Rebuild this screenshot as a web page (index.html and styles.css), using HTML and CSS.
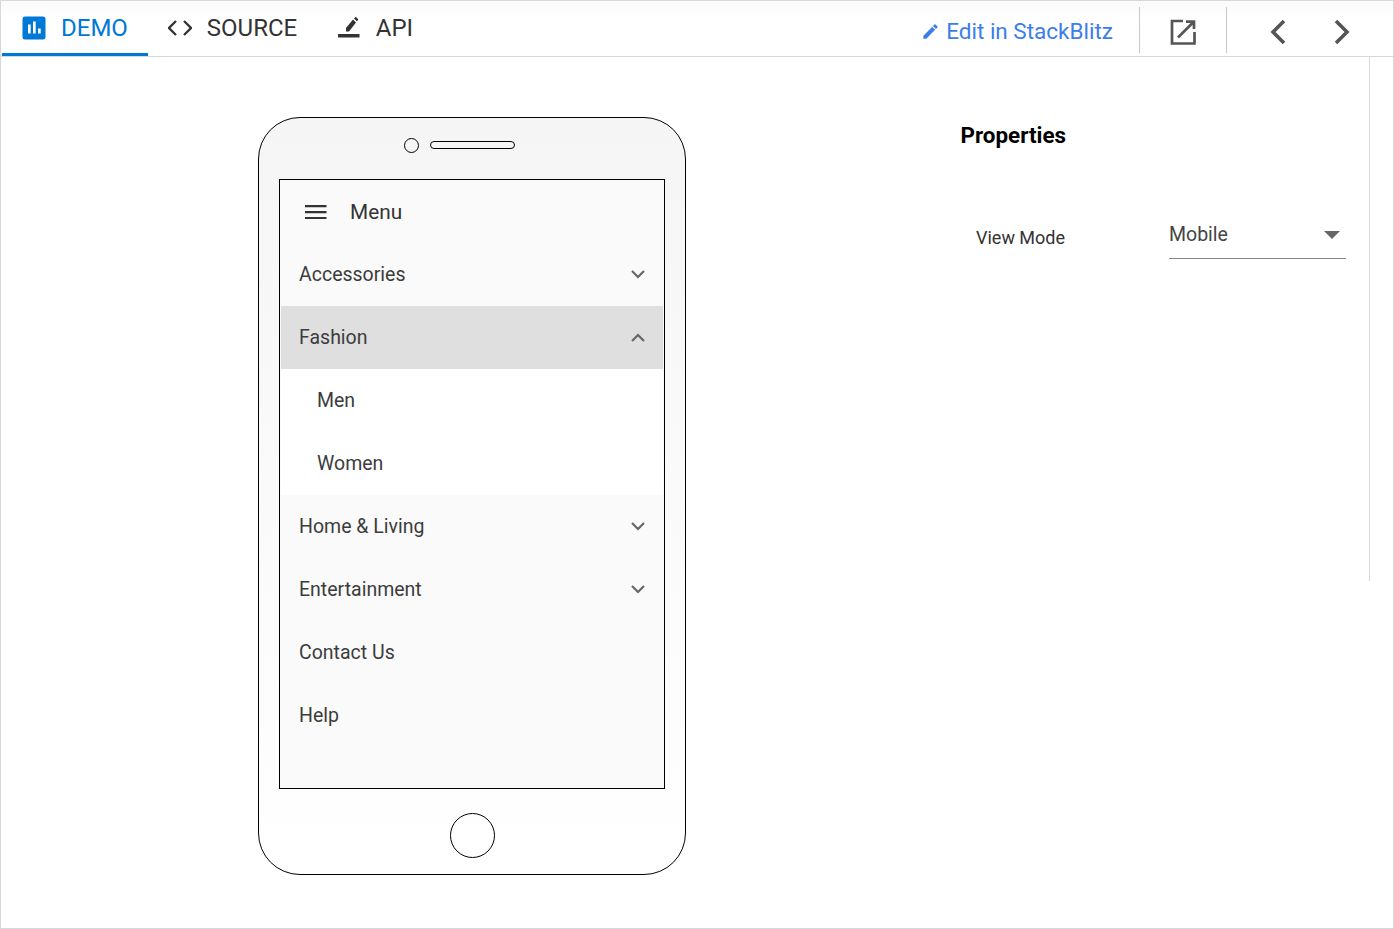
FILE: index.html
```html
<!DOCTYPE html>
<html lang="en">
<head>
    <meta charset="UTF-8">
    <title>Menu Demo</title>
    <link rel="stylesheet" href="styles.css">
</head>
<body>
    <div class="frame">
        <header class="toolbar">
            <nav class="tabs">
                <a class="tab active">
                    <svg class="tab-icon" viewBox="0 0 24 24" width="24" height="24"><path fill="#0078d6" d="M3 .5h18A2.500 2.500 0 0 1 23.500 3v18a2.500 2.500 0 0 1-2.500 2.500H3A2.500 2.500 0 0 1 .5 21V3A2.500 2.500 0 0 1 3 .5z"/><path fill="#fff" d="M6 8.500h2.700v9H6zM11 5.500h2.700v12H11zM16 12.500h2.700v5H16z"/></svg>
                    <span>DEMO</span>
                </a>
                <a class="tab">
                    <svg class="tab-icon" viewBox="0 0 24 24" width="24" height="24"><path fill="none" stroke="#333" stroke-width="2.300" d="M8 5 1 12l7 7M16 5l7 7-7 7"/></svg>
                    <span>SOURCE</span>
                </a>
                <a class="tab">
                    <svg class="tab-icon" viewBox="0 0 24 24" width="24" height="24"><path fill="#333" d="M1 18h21.500v3.500H1zM9 15.500V12l7-8.500 3 3-7 9zM17 2.500l1.200-1.200a.8.8 0 0 1 1.100 0l1.700 1.700a.8.8 0 0 1 0 1.100l-1.200 1.200z"/></svg>
                    <span>API</span>
                </a>
            </nav>
            <div class="actions">
                <a class="edit-link">
                    <svg viewBox="0 0 24 24" width="19" height="19"><path fill="#3b7de9" d="M3 17.250V21h3.750L17.810 9.940l-3.750-3.750L3 17.250zM20.710 7.040a1 1 0 0 0 0-1.410l-2.340-2.340a1 1 0 0 0-1.410 0l-1.830 1.830 3.750 3.750 1.830-1.830z"/></svg>
                    <span>Edit in StackBlitz</span>
                </a>
                <div class="action-box open-box">
                    <svg viewBox="0 0 26 26" width="26" height="26"><path fill="none" stroke="#555" stroke-width="2.700" d="M13 2H2v22.500h22.500V13M24 2.500 8 18.500M16 2.600h8V10"/></svg>
                </div>
                <div class="action-box nav-box">
                    <svg viewBox="0 0 18 26" width="18" height="26"><path fill="none" stroke="#555" stroke-width="3.600" d="M15 2 4 13l11 11"/></svg>
                    <svg viewBox="0 0 18 26" width="18" height="26"><path fill="none" stroke="#555" stroke-width="3.600" d="m3 2 11 11L3 24"/></svg>
                </div>
            </div>
        </header>

        <main class="content">
            <section class="demo-pane">
                <div class="phone">
                    <div class="phone-top">
                        <span class="camera"></span>
                        <span class="speaker"></span>
                    </div>
                    <div class="screen">
                        <div class="menu-head">
                            <svg viewBox="0 0 22 14" width="22" height="14"><path fill="#333" d="M0 0h21.500v2.200H0zM0 6h21.500v2.200H0zM0 12h21.500v2.200H0z"/></svg>
                            <span>Menu</span>
                        </div>
                        <ul class="menu">
                            <li class="menu-item"><span>Accessories</span><svg class="caret" viewBox="0 0 14 9" width="14" height="9"><path d="m1 1 6 6 6-6"/></svg></li>
                            <li class="menu-item open"><span>Fashion</span><svg class="caret" viewBox="0 0 14 9" width="14" height="9"><path d="m1 8 6-6 6 6"/></svg></li>
                            <li class="menu-item sub">Men</li>
                            <li class="menu-item sub">Women</li>
                            <li class="menu-item"><span>Home &amp; Living</span><svg class="caret" viewBox="0 0 14 9" width="14" height="9"><path d="m1 1 6 6 6-6"/></svg></li>
                            <li class="menu-item"><span>Entertainment</span><svg class="caret" viewBox="0 0 14 9" width="14" height="9"><path d="m1 1 6 6 6-6"/></svg></li>
                            <li class="menu-item">Contact Us</li>
                            <li class="menu-item">Help</li>
                        </ul>
                    </div>
                    <div class="phone-bottom">
                        <span class="home-btn"></span>
                    </div>
                </div>
            </section>
            <aside class="props">
                <h2 class="props-title">Properties</h2>
                <div class="prop-row">
                    <label class="prop-label">View Mode</label>
                    <div class="dropdown">
                        <span>Mobile</span>
                        <i class="dropdown-arrow"></i>
                    </div>
                </div>
            </aside>
        </main>
    </div>
</body>
</html>
```

FILE: styles.css
```css
* {
    margin: 0;
    padding: 0;
    box-sizing: border-box;
}

html,
body {
    height: 100%;
    background-color: #fff;
}

body {
    font-family: Roboto, "Liberation Sans", sans-serif;
    color: #333;
    overflow: hidden;
}

.frame {
    height: 929px;
    border: 1px solid #d8d8d8;
}

/* top toolbar */
.toolbar {
    height: 56px;
    display: flex;
    justify-content: space-between;
    border-bottom: 1px solid #d8d8d8;
    background: linear-gradient(#fafafa, #fff 18px);
}

.tabs {
    display: flex;
    padding-left: 1px;
}

.tab {
    display: flex;
    align-items: center;
    height: 55px;
    padding: 1px 20px 0;
    font-size: 24px;
    color: #333;
    border-bottom: 3px solid transparent;
}

.tab:nth-child(2) {
    padding-right: 19.5px;
}

.tab.active {
    color: #0078d6;
    border-bottom-color: #0078d6;
}

.tab-icon {
    margin-right: 15px;
}

.actions {
    display: flex;
    align-items: flex-start;
}

.edit-link {
    display: flex;
    align-items: center;
    gap: 6px;
    height: 52px;
    padding: 8px 26px 0 0;
    font-size: 22.5px;
    color: #3b7de9;
}

.action-box {
    height: 46px;
    margin-top: 6px;
    display: flex;
    align-items: center;
    justify-content: center;
    border-left: 1px solid #c8c8c8;
}

.open-box {
    width: 87px;
    padding-top: 4px;
}

.nav-box {
    width: 167px;
    padding: 4px 1px 0 0;
    gap: 46px;
}

/* demo area */
.content {
    display: flex;
    height: 524px;
}

.demo-pane {
    width: 922px;
    padding: 60px 0 0 257px;
}

.phone {
    width: 428px;
    height: 758px;
    border: 1px solid #000;
    border-radius: 42px;
    background: linear-gradient(#f5f5f5, #fff);
    padding: 0 20px;
    display: flex;
    flex-direction: column;
}

.phone-top {
    height: 61px;
    display: flex;
    align-items: center;
    justify-content: center;
    gap: 11px;
    padding: 0 26px 7px 0;
}

.camera {
    width: 15px;
    height: 15px;
    border: 1px solid #000;
    border-radius: 50%;
}

.speaker {
    width: 85px;
    height: 8px;
    border: 1px solid #000;
    border-radius: 4px;
}

.screen {
    width: 386px;
    height: 610px;
    border: 1px solid #000;
    background-color: #fafafa;
}

.menu-head {
    height: 63px;
    display: flex;
    align-items: center;
    gap: 23px;
    padding-left: 25px;
    font-size: 20.8px;
}

.menu {
    list-style: none;
    padding: 0 1px;
}

.menu-item {
    height: 63px;
    display: flex;
    align-items: center;
    justify-content: space-between;
    padding: 0 18px;
    font-size: 19.5px;
    color: #3c3c3c;
}

.menu-item.open {
    background-color: #dfdfdf;
}

.menu-item.sub {
    padding-left: 36px;
    background-color: #fff;
}

.caret {
    fill: none;
    stroke: #666;
    stroke-width: 2.2;
}

.phone-bottom {
    flex: 1;
    display: flex;
    align-items: center;
    justify-content: center;
    padding-top: 8px;
}

.home-btn {
    width: 45px;
    height: 45px;
    border: 1px solid #000;
    border-radius: 50%;
}

/* properties panel */
.props {
    width: 447px;
    height: 524px;
    border-right: 1px solid #d8d8d8;
    padding-top: 63px;
}

.props-title {
    width: 143px;
    text-align: right;
    font-size: 22.4px;
    line-height: 30px;
    font-weight: 700;
    color: #000;
}

.prop-row {
    display: flex;
    margin-top: 63px;
    align-items: flex-start;
}

.prop-label {
    width: 246px;
    padding: 13px 0 0 53px;
    font-size: 18px;
    line-height: 24px;
    color: #333;
}

.dropdown {
    width: 177px;
    height: 46px;
    margin-right: 23px;
    display: flex;
    justify-content: space-between;
    align-items: center;
    padding: 0 6px 2px 0;
    font-size: 19.5px;
    border-bottom: 1px solid #888;
    color: #444;
}

.dropdown-arrow {
    width: 0;
    height: 0;
    border-left: 8px solid transparent;
    border-right: 8px solid transparent;
    border-top: 8px solid #666;
}
```
